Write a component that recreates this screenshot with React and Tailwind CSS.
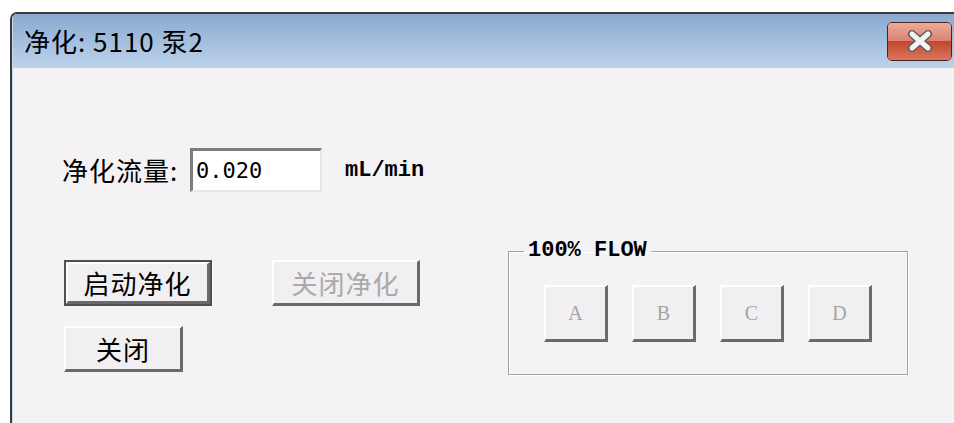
const cjk = { fontFamily: '"Noto Sans CJK SC", "Noto Sans", sans-serif' };
const mono = { fontFamily: '"Liberation Mono", "DejaVu Sans Mono", monospace' };

function CloseButton() {
  return (
    <button className="relative flex h-[39px] w-[65px] items-center justify-center overflow-hidden rounded-[5px] border border-[#4a2222] shadow-[inset_0_0_0_1px_rgba(255,220,210,0.6)]">
      <span className="absolute inset-x-0 top-0 h-1/2 bg-gradient-to-b from-[#ecaa9a] to-[#d9826f]" />
      <span className="absolute inset-x-0 bottom-0 h-1/2 bg-gradient-to-b from-[#c2442c] to-[#d8765c]" />
      <svg width="30" height="22" viewBox="0 0 30 22" className="relative">
        <path d="M7 4 L23 18 M23 4 L7 18" stroke="#5e5e5e" strokeWidth="8" strokeLinecap="round" />
        <path d="M7 4 L23 18 M23 4 L7 18" stroke="#f4f4f4" strokeWidth="5" strokeLinecap="round" />
      </svg>
    </button>
  );
}

// raised classic push button
function PushButton({ children, w, disabled, isDefault }) {
  const face = (
    <div
      className={
        "flex h-full w-full items-center justify-center border-t-2 border-l-2 border-white border-r-[3px] border-b-[3px] border-r-[#6a6a6a] border-b-[#6a6a6a] bg-[#f1eff1] text-[26px] leading-none tracking-[1px] " +
        (disabled ? "text-[#a9a9a9]" : "text-black")
      }
      style={cjk}
    >
      {children}
    </div>
  );
  if (isDefault) {
    return (
      <div className={`h-[46px] border-2 border-[#505050] ${w}`}>{face}</div>
    );
  }
  return <div className={`h-[46px] ${w}`}>{face}</div>;
}

function FlowButton({ label }) {
  return (
    <div
      className="flex h-[57px] w-[64px] items-center justify-center border-t-2 border-l-2 border-white border-r-[3px] border-b-[3px] border-r-[#6a6a6a] border-b-[#6a6a6a] bg-[#f1eff1] text-[20px] text-[#a4a4a4]"
      style={{ fontFamily: '"Liberation Serif", serif' }}
    >
      {label}
    </div>
  );
}

export default function App() {
  return (
    <div className="h-[423px] w-[954px] overflow-hidden bg-white pl-[10px] pt-[12px]">
      <div className="w-[962px] overflow-hidden rounded-tl-[7px] border-l-2 border-t-2 border-[#3a3a3a]">
        {/* title bar */}
        <div className="flex h-[54px] items-center justify-between border-l border-[#c8d9ee] bg-gradient-to-b from-[#8aa9d0] to-[#bdd3eb] pl-[11px] pr-[20px]">
          <span className="text-[26px] leading-none tracking-[1px] text-black" style={cjk}>
            净化: 5110 泵2
          </span>
          <CloseButton />
        </div>

        {/* client area */}
        <div className="h-[360px] border-l border-[#c8d9ee] bg-[#f5f2f6] pl-[49px] pt-[80px]">
          <div className="flex items-center">
            <span className="w-[128px] text-[26px] leading-none tracking-[1px] text-black" style={cjk}>
              净化流量:
            </span>
            <div
              className="flex h-[44px] w-[132px] items-center border-l-[3px] border-t-[3px] border-[#7c7c7c] border-r-2 border-b-2 border-r-[#e6e6e6] border-b-[#e6e6e6] bg-white pl-[3px] text-[22px] text-black"
              style={{ fontFamily: '"DejaVu Sans Mono", monospace' }}
            >
              0.020
            </div>
            <span className="ml-[23px] text-[22px] font-bold text-black" style={mono}>
              mL/min
            </span>
          </div>

          <div className="mt-[48px] flex items-start">
            <div className="flex w-[446px] flex-col gap-[20px] pl-[2px] pt-[20px]">
              <div className="flex gap-[60px]">
                <PushButton w="w-[148px]" isDefault>
                  启动净化
                </PushButton>
                <PushButton w="w-[148px]" disabled>
                  关闭净化
                </PushButton>
              </div>
              <PushButton w="w-[119px]">关闭</PushButton>
            </div>

            <fieldset className="w-[400px] border border-[#a2a2a2] pb-[32px] shadow-[inset_1px_1px_0_#ffffff,1px_1px_0_#ffffff]">
              <legend className="ml-[15px] px-[4px] text-[22px] font-bold leading-[22px] text-black" style={mono}>
                100% FLOW
              </legend>
              <div className="mt-[23px] flex gap-[24px] pl-[35px]">
                {["A", "B", "C", "D"].map((l) => (
                  <FlowButton key={l} label={l} />
                ))}
              </div>
            </fieldset>
          </div>
        </div>
      </div>
    </div>
  );
}
